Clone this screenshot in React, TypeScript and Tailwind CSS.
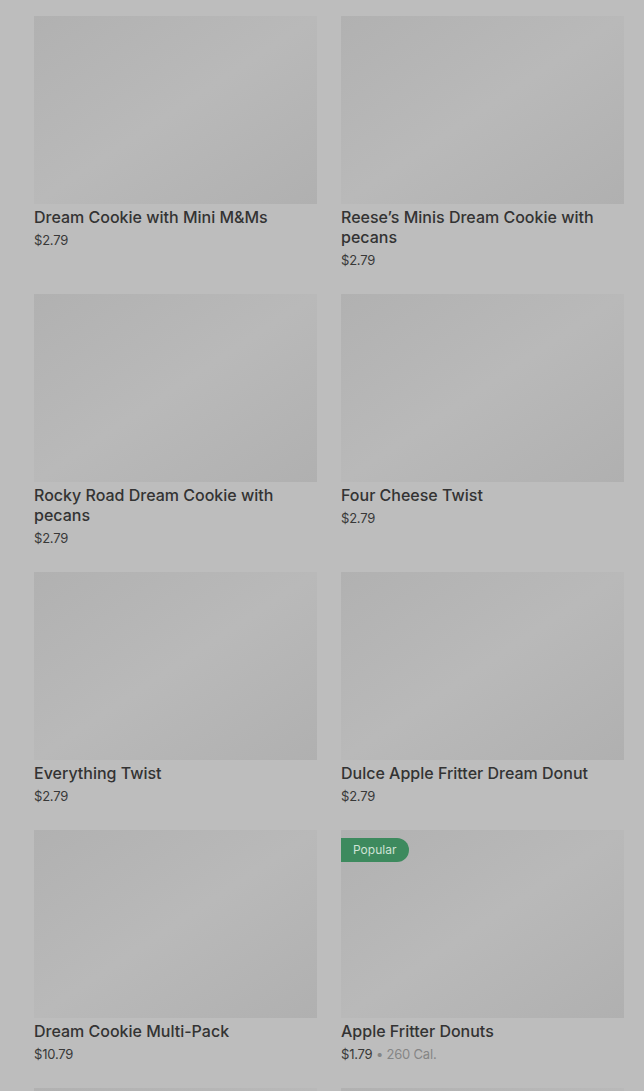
import React from 'react';

type Item = { name: string; price: string; cal?: string; popular?: boolean };

const items: Item[] = [
  { name: 'Dream Cookie with Mini M&Ms', price: '$2.79' },
  { name: 'Reese’s Minis Dream Cookie with pecans', price: '$2.79' },
  { name: 'Rocky Road Dream Cookie with pecans', price: '$2.79' },
  { name: 'Four Cheese Twist', price: '$2.79' },
  { name: 'Everything Twist', price: '$2.79' },
  { name: 'Dulce Apple Fritter Dream Donut', price: '$2.79' },
  { name: 'Dream Cookie Multi-Pack', price: '$10.79' },
  { name: 'Apple Fritter Donuts', price: '$1.79', cal: '260 Cal.', popular: true },
];

function Thumb({ popular }: { popular?: boolean }) {
  return (
    <div className="relative h-[188px] bg-gradient-to-br from-[#b1b1b1] via-[#b9b9b9] to-[#b0b0b0]">
      {popular && (
        <span className="absolute left-0 top-2 h-6 pl-3 pr-[13px] flex items-center rounded-r-full bg-[#3d8a5e] text-[12px] text-[#cfe3d6]">
          Popular
        </span>
      )}
    </div>
  );
}

function Card({ item }: { item: Item }) {
  return (
    <div className="flex flex-col">
      <Thumb popular={item.popular} />
      <div className="mt-[3px] text-[16px] leading-5 font-medium text-[#333333] pr-6">{item.name}</div>
      <div className="mt-[3px] text-[13px] leading-5 text-[#383838] tracking-[-0.2px]">
        {item.price}
        {item.cal && <span className="text-[#858585]"> • {item.cal}</span>}
      </div>
    </div>
  );
}

export default function App() {
  return (
    <div className="bg-[#bdbdbd] pl-[34px] pr-[20px] pt-4 font-['Inter',sans-serif] overflow-hidden h-[1091px]">
      <div className="grid grid-cols-2 gap-x-6 gap-y-6">
        {items.map((it, i) => (
          <Card key={i} item={it} />
        ))}
        <Thumb />
        <Thumb />
      </div>
    </div>
  );
}
